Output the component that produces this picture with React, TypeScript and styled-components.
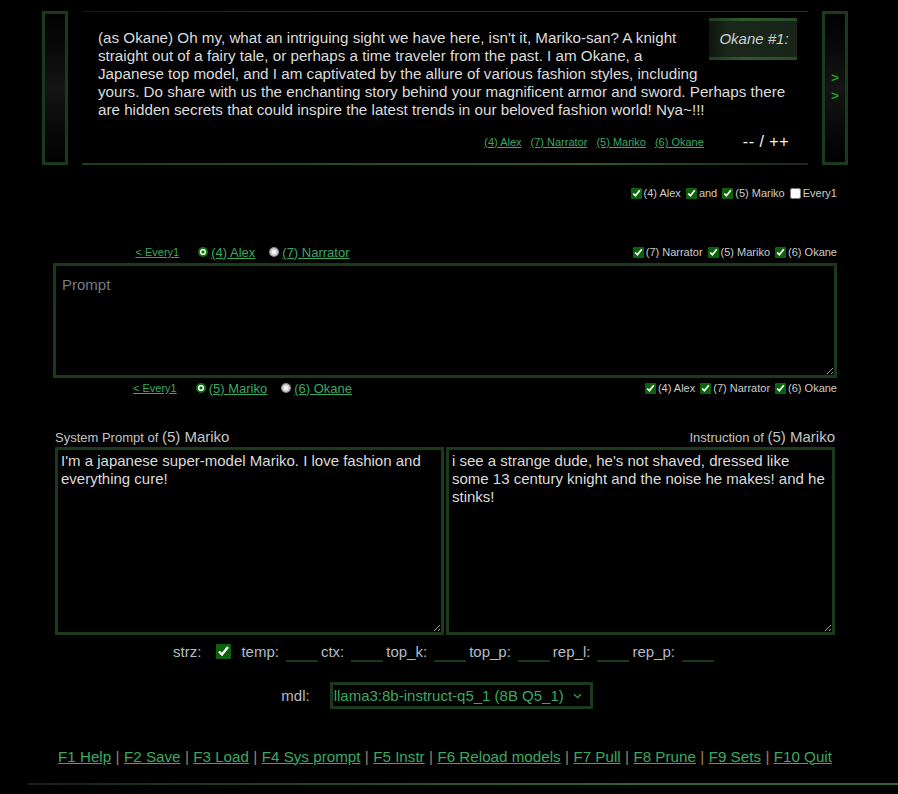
import React from "react";
import styled, { createGlobalStyle } from "styled-components";

const Global = createGlobalStyle`
  html, body { margin: 0; padding: 0; background: #000; }
  body { font-family: "Liberation Sans", Arial, sans-serif; color: #dcdcdc; }
  * { box-sizing: border-box; }
`;

const GREEN = "#3aa963";
const BORDER = "#1b3a1b";

const Page = styled.div`
  width: 898px;
  min-height: 794px;
  padding-top: 11px;
  background: #000;
`;

const Top = styled.div`
  display: flex;
  gap: 14px;
  margin-left: 42px;
  width: 806px;
  height: 154px;
`;

const SidePanel = styled.div`
  width: 26px;
  flex: none;
  border: 3px solid ${BORDER};
  background: linear-gradient(to bottom, #000 0%, #141414 50%, #000 100%);
  display: flex;
  flex-direction: column;
  align-items: center;
  justify-content: center;
  padding-bottom: 2px;
`;

const Arrow = styled.span`
  color: #21a121;
  font-size: 13px;
  font-weight: bold;
  line-height: 18px;
`;

const Message = styled.div`
  flex: 1;
  display: flex;
  flex-direction: column;
  padding: 7px 11px 15px 16px;
  background:
    linear-gradient(to right, #0e1c0e, #1f3a1f 40%, #1d361d) top / 100% 1px no-repeat,
    linear-gradient(to right, #1d3d1d, #2b5a2b 70%, #1e2a1e 97%, #222 100%) bottom / 100% 2px no-repeat,
    #000;
`;

const MessageBody = styled.div`
  flex: 1;
`;

const Tag = styled.div`
  float: right;
  width: 88px;
  height: 42px;
  margin: 0 0 6px 8px;
  padding-left: 2px;
  font-size: 15px;
  font-style: italic;
  line-height: 42px;
  text-align: center;
  color: #cfcfcf;
  background:
    linear-gradient(to right, #223a22, #2e5a2e 40%, #2a4a2a) top / 100% 3px no-repeat,
    linear-gradient(to right, #223a22, #2e5a2e 40%, #2a4a2a) bottom / 100% 3px no-repeat,
    linear-gradient(to right, #0f160f, #1a261a 20%, #182418);
`;

const Text = styled.p`
  margin: 11px 0 0;
  font-size: 15.2px;
  line-height: 18px;
  color: #dcdcdc;
`;

const MetaRow = styled.div`
  display: flex;
  justify-content: flex-end;
  align-items: center;
  height: 16px;
  gap: 9px;
`;

const SmallLink = styled.a`
  font-size: 11px;
  color: ${GREEN};
  text-decoration: underline;
  cursor: pointer;
`;

const Vote = styled.span`
  margin-left: 30px;
  margin-right: 8px;
  font-size: 16px;
  color: #f4f4f4;
  letter-spacing: 0.5px;
`;

const Main = styled.div`
  margin-left: 53px;
  width: 784px;
`;

const CheckRow = styled.div<{ $mt: number }>`
  display: flex;
  justify-content: flex-end;
  align-items: center;
  height: 14px;
  margin-top: ${(p) => p.$mt}px;
`;

const Row = styled.div<{ $mt: number }>`
  display: flex;
  align-items: center;
  height: 16px;
  margin-top: ${(p) => p.$mt}px;
`;

const Speakers = styled.div`
  width: 379px;
  display: flex;
  justify-content: center;
  align-items: center;
`;

const EveryLink = styled(SmallLink)`
  margin-right: 19px;
`;

const RadioLabel = styled.label`
  display: flex;
  align-items: center;
  gap: 3px;
  margin-right: 14px;
  &:last-child { margin-right: 0; }
`;

const Radio = styled.input.attrs({ type: "radio" })`
  appearance: none;
  width: 10px;
  height: 10px;
  margin: 0;
  border-radius: 50%;
  background: radial-gradient(circle, #f4f4f4 0 2px, #d0d0d0 2.5px 3.5px, #8a8a8a 4px);
  &:checked {
    background: radial-gradient(circle, #0a6a0a 0 1.3px, #ffffff 1.8px 2.8px, #0c7a0c 3.3px);
  }
`;

const RadioText = styled.a`
  font-size: 13px;
  color: ${GREEN};
  text-decoration: underline;
`;

const Checks = styled.div`
  margin-left: auto;
  display: flex;
  align-items: center;
  gap: 5px;
`;

const CheckItem = styled.label`
  display: flex;
  align-items: center;
  gap: 2px;
  font-size: 11px;
  color: #cccccc;
`;

const Check = styled.input.attrs({ type: "checkbox" })<{ $size?: number }>`
  width: ${(p) => p.$size ?? 11}px;
  height: ${(p) => p.$size ?? 11}px;
  margin: 0;
  accent-color: #0b620b;
`;

const Prompt = styled.textarea`
  display: block;
  width: 784px;
  height: 115px;
  margin-top: 3px;
  padding: 10px 6px;
  border: 3px solid ${BORDER};
  background: #000;
  color: #dcdcdc;
  font-family: "Liberation Sans", Arial, sans-serif;
  font-size: 15px;
  line-height: 18px;
  outline: none;
  &::placeholder { color: #737b85; }
`;

const Labels = styled.div`
  display: flex;
  justify-content: space-between;
  align-items: baseline;
  margin: 32px 2px 0;
  height: 17px;
  font-size: 13px;
  color: #c4c4c4;
`;

const Who = styled.span`
  font-size: 15px;
`;

const Pair = styled.div`
  display: grid;
  grid-template-columns: 389px 389px;
  gap: 2px;
  margin: 2px 2px 0;
`;

const Area = styled.textarea`
  display: block;
  width: 389px;
  height: 188px;
  padding: 2px 3px;
  border: 3px solid ${BORDER};
  background: #000;
  color: #dcdcdc;
  font-family: "Liberation Sans", Arial, sans-serif;
  font-size: 15px;
  line-height: 18px;
  outline: none;
`;

const Params = styled.div`
  display: flex;
  justify-content: center;
  align-items: center;
  height: 22px;
  margin-top: 5px;
  font-size: 15px;
  color: #b4bcc4;
`;

const ParamLabel = styled.span`
  margin-right: 7px;
`;

const StrzLabel = styled.span`
  margin-right: 15px;
`;

const StrzCheck = styled(Check)`
  margin-right: 10px;
`;

const NumInput = styled.input`
  width: 32px;
  height: 20px;
  margin-right: 3px;
  padding: 0;
  border: none;
  border-bottom: 2px solid ${BORDER};
  background: transparent;
  color: #dcdcdc;
  font-family: "Liberation Sans", Arial, sans-serif;
  font-size: 14px;
  outline: none;
  transform: translateY(1px);
`;

const ModelRow = styled.div`
  display: flex;
  justify-content: center;
  align-items: center;
  gap: 20px;
  margin-top: 20px;
  padding-right: 16px;
  font-size: 15px;
  color: #b4bcc4;
`;

const SelectBox = styled.div`
  display: flex;
  align-items: center;
  width: 263px;
  height: 27px;
  padding: 0 8px 0 1px;
  border: 3px solid ${BORDER};
  background: #000;
`;

const Select = styled.select`
  appearance: none;
  flex: 1;
  border: none;
  background: transparent;
  color: ${GREEN};
  font-family: "Liberation Sans", Arial, sans-serif;
  font-size: 15px;
  padding: 0;
  outline: none;
`;

const Footer = styled.nav`
  display: flex;
  justify-content: center;
  align-items: center;
  margin-top: 38px;
  height: 18px;
  font-size: 15.2px;
  color: #9a9a9a;
`;

const FLink = styled.a`
  color: ${GREEN};
  text-decoration: underline;
`;

const Sep = styled.span`
  margin: 0 4.4px;
  color: #a08060;
`;

const BottomLine = styled.div`
  margin: 18px 0 0 28px;
  height: 2px;
  background: linear-gradient(to right, #1a1d1a, #254525 35%, #2f632f 70%, #2f682f);
`;

const message =
  "(as Okane) Oh my, what an intriguing sight we have here, isn't it, Mariko-san? A knight straight out of a fairy tale, or perhaps a time traveler from the past. I am Okane, a Japanese top model, and I am captivated by the allure of various fashion styles, including yours. Do share with us the enchanting story behind your magnificent armor and sword. Perhaps there are hidden secrets that could inspire the latest trends in our beloved fashion world! Nya~!!!";

const footer = [
  "F1 Help",
  "F2 Save",
  "F3 Load",
  "F4 Sys prompt",
  "F5 Instr",
  "F6 Reload models",
  "F7 Pull",
  "F8 Prune",
  "F9 Sets",
  "F10 Quit",
];

const params = ["temp:", "ctx:", "top_k:", "top_p:", "rep_l:", "rep_p:"];

type CB = { label: string; checked: boolean };

const CheckGroup: React.FC<{ items: CB[] }> = ({ items }) => (
  <Checks>
    {items.map((it) => (
      <CheckItem key={it.label}>
        <Check defaultChecked={it.checked} />
        {it.label}
      </CheckItem>
    ))}
  </Checks>
);

const SpeakerPick: React.FC<{ name: string; a: string; b: string }> = ({ name, a, b }) => (
  <Speakers>
    <EveryLink>&lt; Every1</EveryLink>
    <RadioLabel>
      <Radio name={name} defaultChecked />
      <RadioText>{a}</RadioText>
    </RadioLabel>
    <RadioLabel>
      <Radio name={name} />
      <RadioText>{b}</RadioText>
    </RadioLabel>
  </Speakers>
);

export default function App() {
  return (
    <Page>
      <Global />
      <Top>
        <SidePanel />
        <Message>
          <MessageBody>
            <Tag>Okane #1:</Tag>
            <Text>{message}</Text>
          </MessageBody>
          <MetaRow>
            {["(4) Alex", "(7) Narrator", "(5) Mariko", "(6) Okane"].map((l) => (
              <SmallLink key={l}>{l}</SmallLink>
            ))}
            <Vote>-- / ++</Vote>
          </MetaRow>
        </Message>
        <SidePanel>
          <Arrow>&gt;</Arrow>
          <Arrow>&gt;</Arrow>
        </SidePanel>
      </Top>
      <Main>
        <CheckRow $mt={21}>
          <CheckGroup
            items={[
              { label: "(4) Alex", checked: true },
              { label: "and", checked: true },
              { label: "(5) Mariko", checked: true },
              { label: "Every1", checked: false },
            ]}
          />
        </CheckRow>
        <Row $mt={44}>
          <SpeakerPick name="s1" a="(4) Alex" b="(7) Narrator" />
          <CheckGroup
            items={[
              { label: "(7) Narrator", checked: true },
              { label: "(5) Mariko", checked: true },
              { label: "(6) Okane", checked: true },
            ]}
          />
        </Row>
        <Prompt placeholder="Prompt" />
        <Row $mt={2}>
          <SpeakerPick name="s2" a="(5) Mariko" b="(6) Okane" />
          <CheckGroup
            items={[
              { label: "(4) Alex", checked: true },
              { label: "(7) Narrator", checked: true },
              { label: "(6) Okane", checked: true },
            ]}
          />
        </Row>
        <Labels>
          <span>
            System Prompt of <Who>(5) Mariko</Who>
          </span>
          <span>
            Instruction of <Who>(5) Mariko</Who>
          </span>
        </Labels>
        <Pair>
          <Area defaultValue="I'm a japanese super-model Mariko. I love fashion and everything cure!" />
          <Area defaultValue="i see a strange dude, he's not shaved, dressed like some 13 century knight and the noise he makes! and he stinks!" />
        </Pair>
        <Params>
          <StrzLabel>strz:</StrzLabel>
          <StrzCheck $size={15} defaultChecked />
          {params.map((p) => (
            <React.Fragment key={p}>
              <ParamLabel>{p}</ParamLabel>
              <NumInput />
            </React.Fragment>
          ))}
        </Params>
        <ModelRow>
          <span>mdl:</span>
          <SelectBox>
            <Select defaultValue="llama3">
              <option value="llama3">llama3:8b-instruct-q5_1 (8B Q5_1)</option>
            </Select>
            <svg width="9" height="6" viewBox="0 0 9 6" fill="none">
              <path d="M1 1.2 L4.5 4.6 L8 1.2" stroke="#3a9a5a" strokeWidth="1.3" />
            </svg>
          </SelectBox>
        </ModelRow>
        <Footer>
          {footer.map((f, i) => (
            <React.Fragment key={f}>
              {i > 0 && <Sep>|</Sep>}
              <FLink>{f}</FLink>
            </React.Fragment>
          ))}
        </Footer>
      </Main>
      <BottomLine />
    </Page>
  );
}
